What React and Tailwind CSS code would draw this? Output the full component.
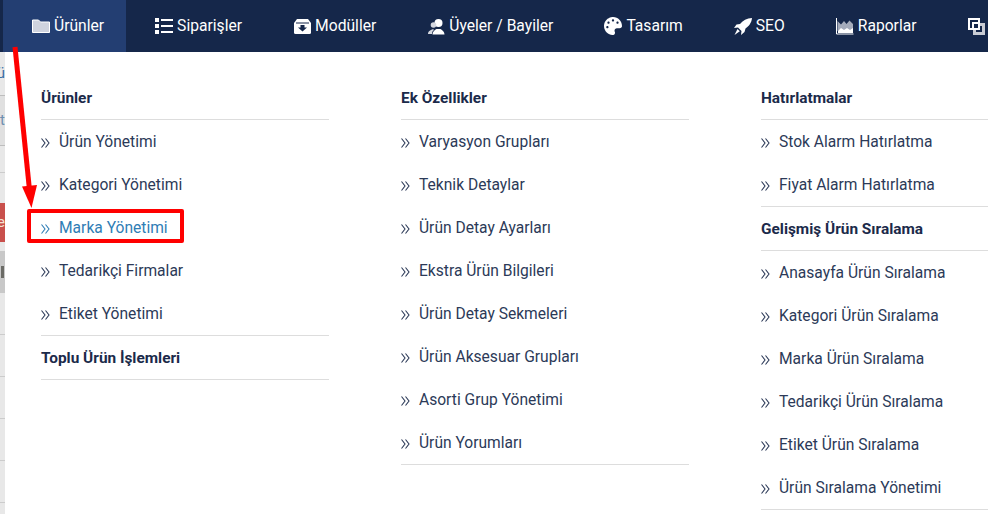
import React from "react";
import { FaPalette } from "react-icons/fa";

const FolderIcon = () => (
  <svg width="18" height="14" viewBox="0 0 18 14">
    <path d="M0.5 1h6l2 2h9v10.5h-17z" fill="#cfd3de" stroke="#ffffff" strokeWidth="1" />
  </svg>
);

const ListIcon = () => (
  <svg width="18" height="16" viewBox="0 0 18 16" fill="#fff">
    <rect x="0" y="0" width="4" height="4" />
    <rect x="0" y="6" width="4" height="4" />
    <rect x="0" y="12" width="4" height="4" />
    <rect x="6" y="1" width="12" height="2" />
    <rect x="6" y="7" width="12" height="2" />
    <rect x="6" y="13" width="12" height="2" />
  </svg>
);

const BoxIcon = () => (
  <svg width="17" height="15" viewBox="0 0 17 15">
    <path d="M3 0h11l3 4v9.5a1.5 1.5 0 0 1-1.5 1.5h-14A1.5 1.5 0 0 1 0 13.5V4z" fill="#fff" />
    <path d="M2 4h13" stroke="#15274a" strokeWidth="1" />
    <path d="M6.500 6h4v2.500h2.500l-4.500 4-4.500-4h2.500z" fill="#15274a" />
  </svg>
);

const UsersIcon = () => (
  <svg width="17" height="17" viewBox="0 0 17 17" fill="#fff">
    <circle cx="10.500" cy="5" r="4" />
    <path d="M0 16c0-3 3-4 5-5l1 1c-2 1-2 3-2 4z" fill="#d5d8e0" />
    <circle cx="5.500" cy="7" r="2.800" fill="#d5d8e0" />
    <path d="M4.500 16.500c0-3 2.500-4.500 4-5.500h4c1.500 1 4 2.500 4 5.500z" />
  </svg>
);

const RocketIcon = () => (
  <svg width="18" height="17" viewBox="0 0 18 17" fill="#fff">
    <path d="M18 0C13 0.300 8.500 2.500 6 6L2.500 6.500L0 10L4 9.500L7.500 13L7 17L10.500 14L11.500 10.500C15 8 17.500 5 18 0z" />
    <path d="M3.500 11L5.800 13.300L0.500 17z" />
  </svg>
);

const ChartIcon = () => (
  <svg width="18" height="17" viewBox="0 0 18 17">
    <path d="M1.500 13V3l3.500 3.500 3-3.500 2.500 3 3-3.500 3.500 3.500v8z" fill="#a4abbb" />
    <path d="M0.500 0v16h17" fill="none" stroke="#fff" strokeWidth="1" />
    <path d="M2 15v-2l3-3 3 2 3-2 3 2 3-2v5z" fill="#fff" />
  </svg>
);

const CloneIcon = () => (
  <svg width="17" height="17" viewBox="0 0 17 17">
    <rect x="1" y="1" width="10" height="10" fill="none" stroke="#ffffff" strokeWidth="2" />
    <rect x="6.500" y="6.500" width="9" height="9" fill="#15274a" stroke="#c9ccd4" strokeWidth="3" />
    <rect x="5" y="5" width="6" height="6" fill="#15274a" stroke="#fff" strokeWidth="2" />
  </svg>
);

const Chevrons = () => (
  <svg width="9" height="10" viewBox="0 0 9 10" fill="none" stroke="currentColor" strokeWidth="1.100">
    <path d="M0.500 0.500L4 5L0.500 9.500" />
    <path d="M4.500 0.500L8 5L4.500 9.500" />
  </svg>
);

const navItems = [
  { label: "Ürünler", icon: <FolderIcon />, active: true },
  { label: "Siparişler", icon: <ListIcon /> },
  { label: "Modüller", icon: <BoxIcon /> },
  { label: "Üyeler / Bayiler", icon: <UsersIcon /> },
  { label: "Tasarım", icon: <FaPalette size={18} color="#fff" /> },
  { label: "SEO", icon: <RocketIcon /> },
  { label: "Raporlar", icon: <ChartIcon /> },
  { label: "", icon: <CloneIcon /> },
];

const columns = [
  [
    { title: "Ürünler", items: ["Ürün Yönetimi", "Kategori Yönetimi", "Marka Yönetimi", "Tedarikçi Firmalar", "Etiket Yönetimi"] },
    { title: "Toplu Ürün İşlemleri", items: [] },
  ],
  [
    {
      title: "Ek Özellikler",
      items: [
        "Varyasyon Grupları",
        "Teknik Detaylar",
        "Ürün Detay Ayarları",
        "Ekstra Ürün Bilgileri",
        "Ürün Detay Sekmeleri",
        "Ürün Aksesuar Grupları",
        "Asorti Grup Yönetimi",
        "Ürün Yorumları",
      ],
    },
  ],
  [
    { title: "Hatırlatmalar", items: ["Stok Alarm Hatırlatma", "Fiyat Alarm Hatırlatma"] },
    {
      title: "Gelişmiş Ürün Sıralama",
      items: [
        "Anasayfa Ürün Sıralama",
        "Kategori Ürün Sıralama",
        "Marka Ürün Sıralama",
        "Tedarikçi Ürün Sıralama",
        "Etiket Ürün Sıralama",
        "Ürün Sıralama Yönetimi",
      ],
    },
  ],
];

const MenuGroup = ({ title, items }) => (
  <div>
    <div className="h-[44px] pt-[2px] flex items-center border-b border-[#dddddd] text-[15.400px] font-bold text-[#1b2a4a]">
      {title}
    </div>
    {items.length > 0 && (
      <ul className="border-b border-[#dddddd]">
        {items.map((item) => (
          <li
            key={item}
            className={`h-[43px] pt-[2px] flex items-center text-[15.600px] ${
              item === "Marka Yönetimi" ? "text-[#2f7db5]" : "text-[#2c3a58]"
            }`}
          >
            <span className="w-[18px] flex">
              <Chevrons />
            </span>
            {item}
          </li>
        ))}
      </ul>
    )}
  </div>
);

const App = () => {
  return (
    <div className="relative w-[988px] h-[514px] overflow-hidden bg-white font-['Roboto',sans-serif]">
      <nav className="h-[52px] pl-[3px] flex bg-[#15274a] text-white text-[15.650px] whitespace-nowrap">
        {navItems.map((item, i) => (
          <div
            key={i}
            className={`flex items-center gap-[4px] pl-[29px] pr-[22px] ${item.active ? "bg-[#233e72]" : ""}`}
          >
            <span className="w-[18px] flex justify-center">{item.icon}</span>
            {item.label}
          </div>
        ))}
      </nav>

      <div className="flex h-[462px]">
        {/* page behind the menu, only a sliver shows */}
        <div className="w-[5px] shrink-0 bg-[#e8e8e8] overflow-hidden text-[15px] whitespace-nowrap">
          <div className="h-[44px] flex items-center justify-end border-b border-[#bdbdbd] text-[#3b6ea5]">ü</div>
          <div className="h-[50px] flex items-center border-b border-[#bdbdbd] bg-[#e0e0e0] text-[#6f8fb0]">t</div>
          <div className="h-[27px] border-b border-[#cccccc]" />
          <div className="h-[30px]" />
          <div className="h-[39px] flex items-center justify-end bg-[#c9504c] text-[#f3e2d0]">e</div>
          <div className="h-[9px]" />
          <div className="h-[42px] flex items-center bg-[#c8c8c8]">
            <span className="w-[3px] h-[12px] ml-[1px] bg-[#6b6b66]" />
          </div>
          <div className="h-[42px] border-b border-[#cccccc]" />
          <div className="h-[42px] border-b border-[#cccccc]" />
          <div className="h-[42px] border-b border-[#cccccc]" />
          <div className="h-[42px] border-b border-[#cccccc]" />
          <div className="h-[42px] border-b border-[#cccccc]" />
        </div>
        <div className="flex-1 pt-[24px] pl-[36px] flex gap-[72px]">
          {columns.map((groups, i) => (
            <div key={i} className="w-[288px] shrink-0">
              {groups.map((group) => (
                <MenuGroup key={group.title} title={group.title} items={group.items} />
              ))}
            </div>
          ))}
        </div>
      </div>

      {/* annotation: red box and arrow drawn over the screenshot */}
      <div className="absolute left-[27px] top-[209px] w-[157px] h-[34px] border-4 border-[#ff0000] rounded-[2px]" />
      <svg className="absolute left-0 top-0" width="60" height="220" viewBox="0 0 60 220">
        <path d="M15 47L29.500 190" stroke="#ff0000" strokeWidth="5" fill="none" />
        <path d="M22 186.500L37 185L31.500 208z" fill="#ff0000" />
      </svg>
    </div>
  );
};

export default App;
